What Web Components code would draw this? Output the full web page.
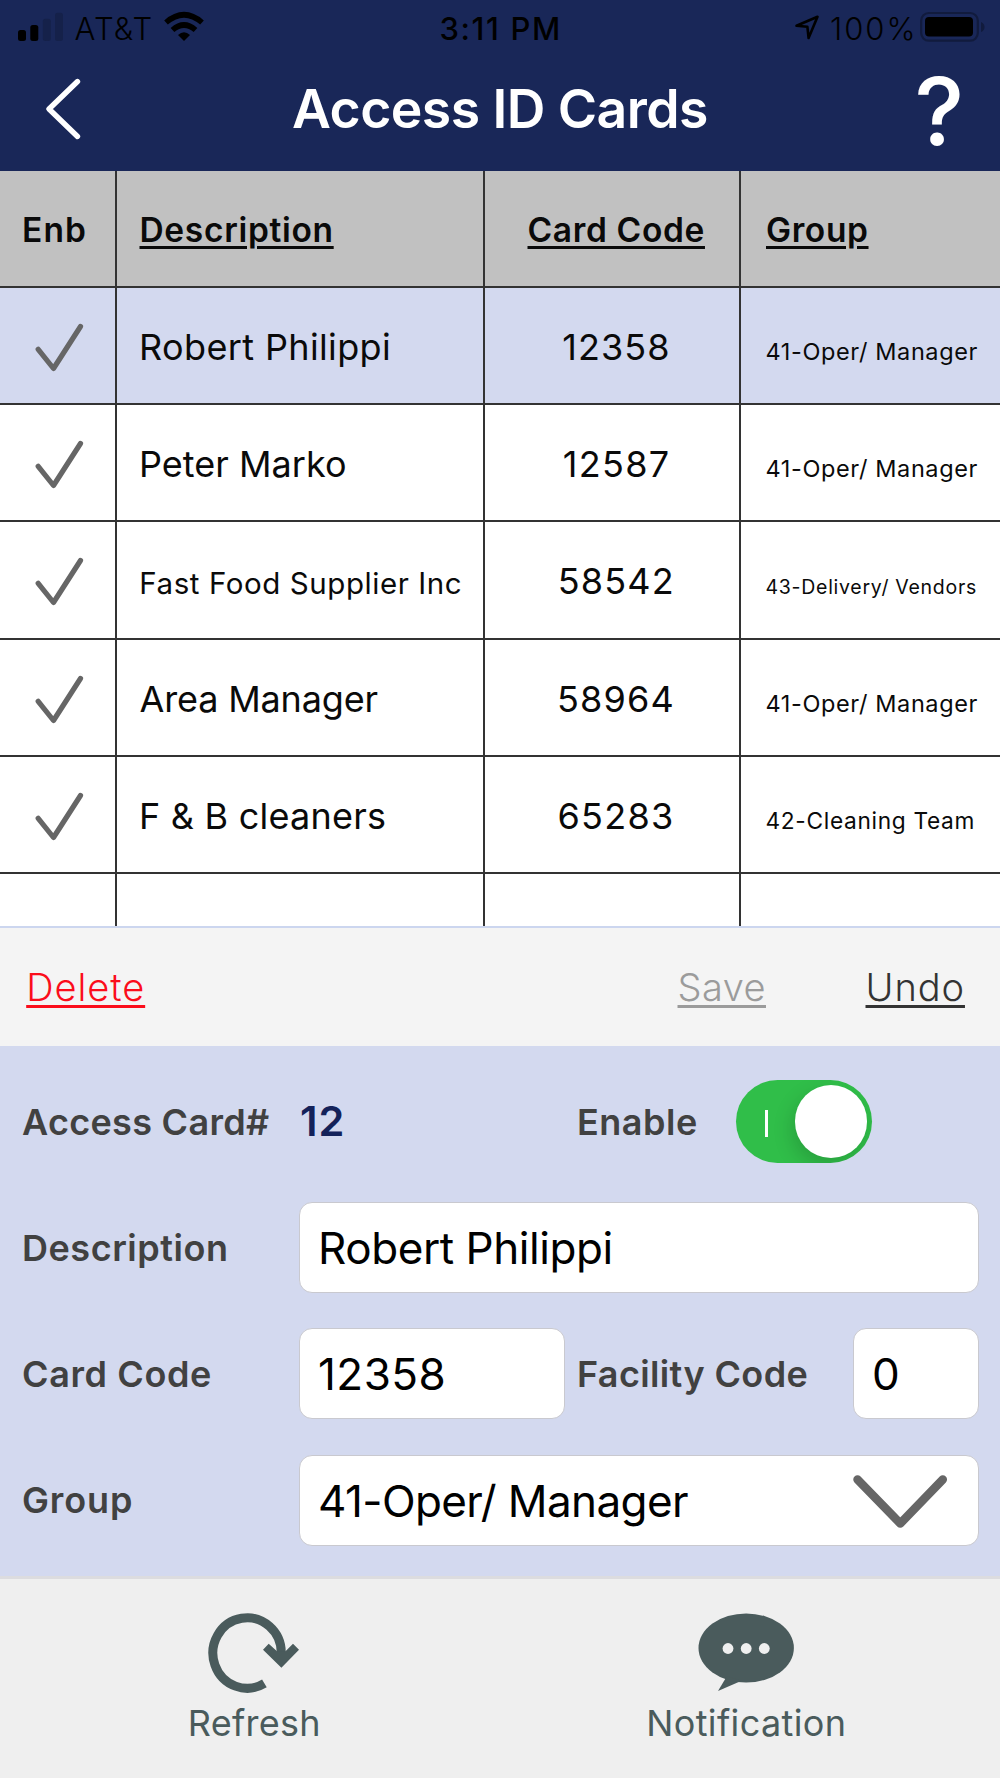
<!DOCTYPE html>
<html lang="en">
<head>
<meta charset="utf-8">
<title>Access ID Cards</title>
<style>
html,body{margin:0;padding:0}
body{width:1000px;height:1778px;overflow:hidden;font-family:Inter,"Liberation Sans",sans-serif;color:#0a0a0a;background:#efefef}
</style>
</head>
<body>
<card-app></card-app>
<script>
const FONT = 'Inter,"Liberation Sans",sans-serif';
function component(name, html, setup) {
  const t = document.createElement('template');
  t.innerHTML = html;
  customElements.define(name, class extends HTMLElement {
    connectedCallback() {
      if (this.shadowRoot) return;
      const root = this.attachShadow({ mode: 'open' });
      root.append(t.content.cloneNode(true));
      if (setup) setup.call(this, root);
    }
  });
}

/* One line of text, tracked so that its ink fills exactly the width "w". */
const ctx = document.createElement('canvas').getContext('2d');
component('fit-text', `
<style>
:host{display:inline-block;line-height:1;white-space:nowrap}
:host([u]) span{text-decoration:underline;text-decoration-thickness:3px;text-underline-offset:var(--uo,4px)}
span{display:inline-block}
</style><span><slot></slot></span>`, function (root) {
  const size = +this.getAttribute('size'), weight = this.getAttribute('weight') || 400;
  const w = +this.getAttribute('w'), text = this.textContent, span = root.querySelector('span');
  ctx.font = `${weight} ${size}px ${FONT}`;
  const m = ctx.measureText(text);
  const ink = m.actualBoundingBoxRight + m.actualBoundingBoxLeft;
  const ls = text.length > 1 ? (w - ink) / (text.length - 1) : 0;
  this.style.fontSize = size + 'px';
  this.style.fontWeight = weight;
  this.style.width = w + 'px';
  span.style.letterSpacing = ls.toFixed(3) + 'px';
  span.style.marginLeft = m.actualBoundingBoxLeft.toFixed(2) + 'px';
});

component('status-bar', `
<style>
:host{display:grid;grid-template-columns:440.500px 1fr 205.500px;height:56px;color:#000;align-items:center}
div{display:flex;align-items:center}
.l{padding-left:18px}.l fit-text{margin:0 12.500px 0 11.500px}
svg{display:block}
.r fit-text{margin:0 7.500px 0 12.500px}
</style>
<div class="l">
<svg width="45" height="56"><rect y="30" width="8" height="11" rx="2.5"/><rect x="12.3" y="25" width="8" height="16" rx="2.5"/><g fill="#15214a"><rect x="24.8" y="18.7" width="8" height="22.3" rx="2.5"/><rect x="37" y="12.7" width="8" height="28.3" rx="2.5"/></g></svg>
<fit-text size="31" weight="350" w="77">AT&amp;T</fit-text>
<svg width="40" height="56" fill="none" stroke="#000"><path d="M2 22.500Q20 7 38 22.500" stroke-width="5.600"/><path d="M8.500 30Q20 20 31.500 30" stroke-width="5.600"/><path d="M20 41L14 35Q20 29.500 26 35Z" fill="#000" stroke="none"/></svg>
</div>
<div><fit-text size="31" weight="500" w="117.5">3:11 PM</fit-text></div>
<div class="r">
<svg width="24" height="56"><path d="M1.5 25.8L22.5 16.8L13.6 38L12.4 26.8Z" fill="none" stroke="#000" stroke-width="2.6" stroke-linejoin="round"/></svg>
<fit-text size="31" weight="350" w="81.500">100%</fit-text>
<svg width="66" height="56"><rect x="1.2" y="13" width="56.6" height="27.6" rx="7.5" fill="none" stroke="#111b3d" stroke-width="2.2"/><rect x="5" y="17" width="48" height="19.5" rx="4"/><path d="M61 22Q64.500 23.500 64.500 27Q64.500 30.500 61 32Z" fill="#111b3d"/></svg>
</div>`);

component('app-header', `
<style>
:host{display:block;height:170.5px;background:#192758;color:#fff}
nav{display:grid;grid-template-columns:293px 1fr 83px;height:105px;align-items:center}
svg{display:block;margin-left:44px}
</style>
<status-bar></status-bar>
<nav>
<svg width="40" height="64" viewBox="44 77 40 64" fill="none" stroke="#fff" stroke-width="5.400" stroke-linecap="round" stroke-linejoin="round"><path d="M77.500 81.500L49 109L77.500 136.500"/></svg>
<fit-text size="53.500" weight="600" w="414">Access ID Cards</fit-text>
<fit-text size="94" weight="500" w="41" style="margin:4px 0 0 .500px">?</fit-text>
</nav>`);

const TICK = '<svg width="116" height="115" viewBox="0 287.500 116 115" fill="none" stroke="#666" stroke-width="5.200" stroke-linecap="round" stroke-linejoin="round"><path d="M38.200 348.800L53.500 368L80.500 326"/></svg>';

/* Table row: the four cells are passed in as slotted texts. */
component('card-row', `
<style>
:host{display:grid;grid-template-columns:117px 368px 256px 259px;height:117.333px;box-sizing:border-box;border-bottom:2px solid #333;background:#fff}
:host([selected]){background:#d3d9ef}
:host([head]){background:#c1c1c1}
:host([part]){height:51.500px;border:0}
div{box-sizing:border-box;border-right:2px solid #333;font-size:36px;line-height:119px;padding-left:25px;height:100%;overflow:hidden}
div:last-child{border:0;padding-left:25.500px}
.e{padding:0}.c{text-align:center;padding-left:7.500px}
:host([head]) div{font-size:33.500px;line-height:118px;padding-left:24.500px}
:host([head]) div:last-child{padding-left:26px}
:host([head]) .c{padding-left:8px}
:host([head]) .e{padding-left:24px}
svg{display:block}
</style>
<div class="e"><slot name="e"></slot></div><div><slot name="d"></slot></div><div class="c"><slot name="c"></slot></div><div><slot name="g"></slot></div>`,
function (root) {
  if (!this.hasAttribute('head') && !this.hasAttribute('part')) root.querySelector('.e').innerHTML = TICK;
});

component('card-table', `
<style>:host{display:block;height:755.500px;overflow:hidden}fit-text{--uo:4px}</style>
<card-row head>
<fit-text slot="e" size="33.500" weight="600" w="61">Enb</fit-text>
<fit-text slot="d" u size="33.500" weight="600" w="190">Description</fit-text>
<fit-text slot="c" u size="33.500" weight="600" w="175">Card Code</fit-text>
<fit-text slot="g" u size="33.500" weight="600" w="100">Group</fit-text>
</card-row>
<card-row selected>
<fit-text slot="d" size="36" w="247">Robert Philippi</fit-text><fit-text slot="c" size="36" w="105">12358</fit-text><fit-text slot="g" size="23.500" w="211">41-Oper/ Manager</fit-text>
</card-row>
<card-row>
<fit-text slot="d" size="36" w="203">Peter Marko</fit-text><fit-text slot="c" size="36" w="104">12587</fit-text><fit-text slot="g" size="23.500" w="211">41-Oper/ Manager</fit-text>
</card-row>
<card-row>
<fit-text slot="d" size="29.500" w="319.500" style="margin-left:-.7px">Fast Food Supplier Inc</fit-text><fit-text slot="c" size="36" w="112">58542</fit-text><fit-text slot="g" size="19.500" w="209.500">43-Delivery/ Vendors</fit-text>
</card-row>
<card-row>
<fit-text slot="d" size="36" w="238" style="margin-left:-2.500px">Area Manager</fit-text><fit-text slot="c" size="36" w="113.500">58964</fit-text><fit-text slot="g" size="23.500" w="211">41-Oper/ Manager</fit-text>
</card-row>
<card-row>
<fit-text slot="d" size="36" w="243">F &amp; B cleaners</fit-text><fit-text slot="c" size="36" w="112.500">65283</fit-text><fit-text slot="g" size="22.700" w="207">42-Cleaning Team</fit-text>
</card-row>
<card-row part></card-row>`);

component('action-bar', `
<style>
:host{display:flex;align-items:center;box-sizing:border-box;height:119.500px;border-top:2px solid #ccd6ef;background:#f4f4f4;padding:0 37.500px 0 29.200px}
.d{color:#fb0d1b;margin-right:auto}.s{color:#9b9b9b;margin-right:104px}.u{color:#333}
fit-text{--uo:4px}
</style>
<fit-text class="d" u size="38" weight="350" w="114">Delete</fit-text>
<fit-text class="s" u size="38" weight="350" w="85">Save</fit-text>
<fit-text class="u" u size="38" weight="350" w="94">Undo</fit-text>`);

component('text-field', `
<style>
:host{display:flex;align-items:center;justify-content:space-between;box-sizing:border-box;height:91px;border:1.500px solid #c9c9cf;border-radius:13px;background:#fff;color:#000;padding:1px 30px 0 20px}
</style><slot></slot>`);

component('toggle-switch', `
<style>
:host{display:flex;align-items:center;box-sizing:border-box;width:136px;height:83px;border-radius:42px;background:#30be49;padding:0 5px 0 29px;justify-content:space-between;overflow:hidden}
i{width:3px;height:27px;background:#fff;margin-top:3px}
b{width:72.500px;height:72.500px;border-radius:50%;background:#fff;box-shadow:-3px 8px 20px rgba(0,0,0,.16)}
</style><i></i><b></b>`);

component('card-form', `
<style>
:host{display:flex;flex-direction:column;gap:35.200px;box-sizing:border-box;height:530.500px;background:#d3d9ef;color:#414141;padding:30.500px 21px 0 23px}
.row{display:grid;grid-template-columns:276px 266px 13px 275px 126px;align-items:center;height:91px}
.wide{grid-column:2/-1}
.num{color:#14225a;margin-left:2px}
.lab{grid-column:4}
.mix{grid-template-columns:276px 279px 158px 1fr}
.st{margin-left:1px}
</style>
<div class="row mix">
<fit-text size="36" weight="600" w="247" style="margin-left:-1px">Access Card#</fit-text>
<fit-text class="num" size="41.500" weight="600" w="41.500">12</fit-text>
<fit-text class="st" size="36" weight="600" w="117">Enable</fit-text>
<toggle-switch></toggle-switch>
</div>
<div class="row"><fit-text class="st" size="36" weight="600" w="202">Description</fit-text>
<text-field class="wide"><fit-text size="44" w="290.500" style="margin-left:1px">Robert Philippi</fit-text></text-field></div>
<div class="row"><fit-text size="36" weight="600" w="187">Card Code</fit-text>
<text-field><fit-text size="44" w="123.500">12358</fit-text></text-field>
<fit-text class="lab st" size="36" weight="600" w="227.500">Facility Code</fit-text>
<text-field><fit-text size="44" w="24">0</fit-text></text-field></div>
<div class="row"><fit-text size="36" weight="600" w="108">Group</fit-text>
<text-field class="wide"><fit-text size="44" w="368">41-Oper/ Manager</fit-text>
<svg width="96" height="56" viewBox="852 1472 96 56" fill="none" stroke="#666" stroke-width="8.500" stroke-linecap="round" stroke-linejoin="round"><path d="M857.500 1478.500L900.300 1522.500L942.800 1478.500"/></svg>
</text-field></div>`);

component('tab-item', `
<style>:host{display:flex;flex-direction:column;align-items:center;width:300px;color:#4a5b5c}::slotted(svg){display:block;margin-bottom:11px}</style>
<slot></slot>`);

component('tab-bar', `
<style>
:host{display:flex;box-sizing:border-box;height:202px;border-top:3px solid #dcdcdf;background:#efefef;padding:29px 104px 0;justify-content:space-between}
.t{margin-left:1px}
</style>
<tab-item>
<svg width="100" height="86" viewBox="204.500 1607.200 100 86" overflow="visible"><path d="M264.900 1682.600A34.200 35.200 0 1 1 281.800 1653" fill="none" stroke="#4a5b5c" stroke-width="9"/><path d="M263.500 1649L269.200 1643L277.500 1650.500L286 1650.500L293.500 1643L299.500 1649L281.900 1667Z" fill="#4a5b5c"/></svg>
<fit-text class="t" size="36" w="127.500">Refresh</fit-text>
</tab-item>
<tab-item>
<svg width="100" height="86" viewBox="696 1608 100 86" fill="#4a5b5c"><ellipse cx="746.200" cy="1648" rx="47.700" ry="34.600"/><path d="M727 1676L718 1691L741 1681Z"/><g fill="#efefef"><circle cx="728" cy="1648.500" r="5.400"/><circle cx="746.200" cy="1648.500" r="5.400"/><circle cx="764.300" cy="1648.500" r="5.400"/></g></svg>
<fit-text class="t" size="36" w="194.500">Notification</fit-text>
</tab-item>`);

component('card-app', `
<style>:host{display:block}</style>
<app-header></app-header><card-table></card-table><action-bar></action-bar><card-form></card-form><tab-bar></tab-bar>`);
</script>
</body>
</html>
